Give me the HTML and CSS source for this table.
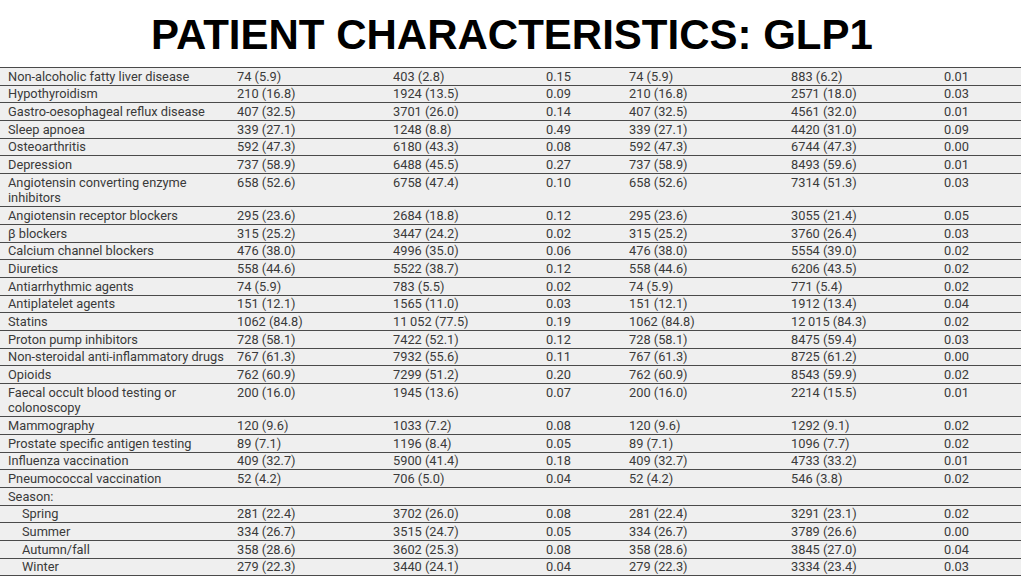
FILE: index.html
```html
<!DOCTYPE html>
<html lang="en">
<head>
<meta charset="utf-8">
<title>Patient characteristics: GLP1</title>
<link rel="stylesheet" href="styles.css">
</head>
<body>
<h1 class="title">PATIENT CHARACTERISTICS: GLP1</h1>
<table class="data">
<colgroup>
<col class="c1"><col class="c2"><col class="c3"><col class="c4"><col class="c5"><col class="c6"><col class="c7">
</colgroup>
<tbody>
<tr><td>Non-alcoholic fatty liver disease</td><td>74 (5.9)</td><td>403 (2.8)</td><td>0.15</td><td>74 (5.9)</td><td>883 (6.2)</td><td>0.01</td></tr>
<tr><td>Hypothyroidism</td><td>210 (16.8)</td><td>1924 (13.5)</td><td>0.09</td><td>210 (16.8)</td><td>2571 (18.0)</td><td>0.03</td></tr>
<tr><td>Gastro-oesophageal reflux disease</td><td>407 (32.5)</td><td>3701 (26.0)</td><td>0.14</td><td>407 (32.5)</td><td>4561 (32.0)</td><td>0.01</td></tr>
<tr><td>Sleep apnoea</td><td>339 (27.1)</td><td>1248 (8.8)</td><td>0.49</td><td>339 (27.1)</td><td>4420 (31.0)</td><td>0.09</td></tr>
<tr><td>Osteoarthritis</td><td>592 (47.3)</td><td>6180 (43.3)</td><td>0.08</td><td>592 (47.3)</td><td>6744 (47.3)</td><td>0.00</td></tr>
<tr><td>Depression</td><td>737 (58.9)</td><td>6488 (45.5)</td><td>0.27</td><td>737 (58.9)</td><td>8493 (59.6)</td><td>0.01</td></tr>
<tr><td>Angiotensin converting enzyme inhibitors</td><td>658 (52.6)</td><td>6758 (47.4)</td><td>0.10</td><td>658 (52.6)</td><td>7314 (51.3)</td><td>0.03</td></tr>
<tr><td>Angiotensin receptor blockers</td><td>295 (23.6)</td><td>2684 (18.8)</td><td>0.12</td><td>295 (23.6)</td><td>3055 (21.4)</td><td>0.05</td></tr>
<tr><td>β blockers</td><td>315 (25.2)</td><td>3447 (24.2)</td><td>0.02</td><td>315 (25.2)</td><td>3760 (26.4)</td><td>0.03</td></tr>
<tr><td>Calcium channel blockers</td><td>476 (38.0)</td><td>4996 (35.0)</td><td>0.06</td><td>476 (38.0)</td><td>5554 (39.0)</td><td>0.02</td></tr>
<tr><td>Diuretics</td><td>558 (44.6)</td><td>5522 (38.7)</td><td>0.12</td><td>558 (44.6)</td><td>6206 (43.5)</td><td>0.02</td></tr>
<tr><td>Antiarrhythmic agents</td><td>74 (5.9)</td><td>783 (5.5)</td><td>0.02</td><td>74 (5.9)</td><td>771 (5.4)</td><td>0.02</td></tr>
<tr><td>Antiplatelet agents</td><td>151 (12.1)</td><td>1565 (11.0)</td><td>0.03</td><td>151 (12.1)</td><td>1912 (13.4)</td><td>0.04</td></tr>
<tr><td>Statins</td><td>1062 (84.8)</td><td>11&#8201;052 (77.5)</td><td>0.19</td><td>1062 (84.8)</td><td>12&#8201;015 (84.3)</td><td>0.02</td></tr>
<tr><td>Proton pump inhibitors</td><td>728 (58.1)</td><td>7422 (52.1)</td><td>0.12</td><td>728 (58.1)</td><td>8475 (59.4)</td><td>0.03</td></tr>
<tr><td>Non-steroidal anti-inflammatory drugs</td><td>767 (61.3)</td><td>7932 (55.6)</td><td>0.11</td><td>767 (61.3)</td><td>8725 (61.2)</td><td>0.00</td></tr>
<tr><td>Opioids</td><td>762 (60.9)</td><td>7299 (51.2)</td><td>0.20</td><td>762 (60.9)</td><td>8543 (59.9)</td><td>0.02</td></tr>
<tr><td>Faecal occult blood testing or colonoscopy</td><td>200 (16.0)</td><td>1945 (13.6)</td><td>0.07</td><td>200 (16.0)</td><td>2214 (15.5)</td><td>0.01</td></tr>
<tr><td>Mammography</td><td>120 (9.6)</td><td>1033 (7.2)</td><td>0.08</td><td>120 (9.6)</td><td>1292 (9.1)</td><td>0.02</td></tr>
<tr><td>Prostate specific antigen testing</td><td>89 (7.1)</td><td>1196 (8.4)</td><td>0.05</td><td>89 (7.1)</td><td>1096 (7.7)</td><td>0.02</td></tr>
<tr><td>Influenza vaccination</td><td>409 (32.7)</td><td>5900 (41.4)</td><td>0.18</td><td>409 (32.7)</td><td>4733 (33.2)</td><td>0.01</td></tr>
<tr><td>Pneumococcal vaccination</td><td>52 (4.2)</td><td>706 (5.0)</td><td>0.04</td><td>52 (4.2)</td><td>546 (3.8)</td><td>0.02</td></tr>
<tr><td>Season:</td><td></td><td></td><td></td><td></td><td></td><td></td></tr>
<tr><td class="sub">Spring</td><td>281 (22.4)</td><td>3702 (26.0)</td><td>0.08</td><td>281 (22.4)</td><td>3291 (23.1)</td><td>0.02</td></tr>
<tr><td class="sub">Summer</td><td>334 (26.7)</td><td>3515 (24.7)</td><td>0.05</td><td>334 (26.7)</td><td>3789 (26.6)</td><td>0.00</td></tr>
<tr><td class="sub">Autumn/fall</td><td>358 (28.6)</td><td>3602 (25.3)</td><td>0.08</td><td>358 (28.6)</td><td>3845 (27.0)</td><td>0.04</td></tr>
<tr><td class="sub">Winter</td><td>279 (22.3)</td><td>3440 (24.1)</td><td>0.04</td><td>279 (22.3)</td><td>3334 (23.4)</td><td>0.03</td></tr>
</tbody>
</table>
</body>
</html>
```

FILE: styles.css
```css
html, body {
  margin: 0;
  padding: 0;
  background: #ffffff;
}

body {
  width: 1024px;
  height: 576px;
  overflow: hidden;
}

.title {
  margin: 0;
  padding-top: 11px;
  height: 67px;
  box-sizing: border-box;
  font-family: "Liberation Sans", Arial, sans-serif;
  font-weight: bold;
  font-size: 42px;
  line-height: 48px;
  color: #000000;
  text-align: center;
}

.data {
  width: 1021px;
  table-layout: fixed;
  border-collapse: collapse;
  background: #efefef;
  font-family: Roboto, "Noto Sans", sans-serif;
  font-size: 12.8px;
  font-weight: 400;
  color: #3a3a3a;
}

.c1 { width: 229px; }
.c2 { width: 156px; }
.c3 { width: 153px; }
.c4 { width: 83px; }
.c5 { width: 162px; }
.c6 { width: 153px; }
.c7 { width: 85px; }

.data td {
  padding: 0.65px 4px 0.65px 8px;
  line-height: 15.4px;
  border-top: 1px solid #4a4a4a;
  border-bottom: 1px solid #4a4a4a;
  vertical-align: top;
  white-space: normal;
}

.data td.sub {
  padding-left: 22px;
}
```
